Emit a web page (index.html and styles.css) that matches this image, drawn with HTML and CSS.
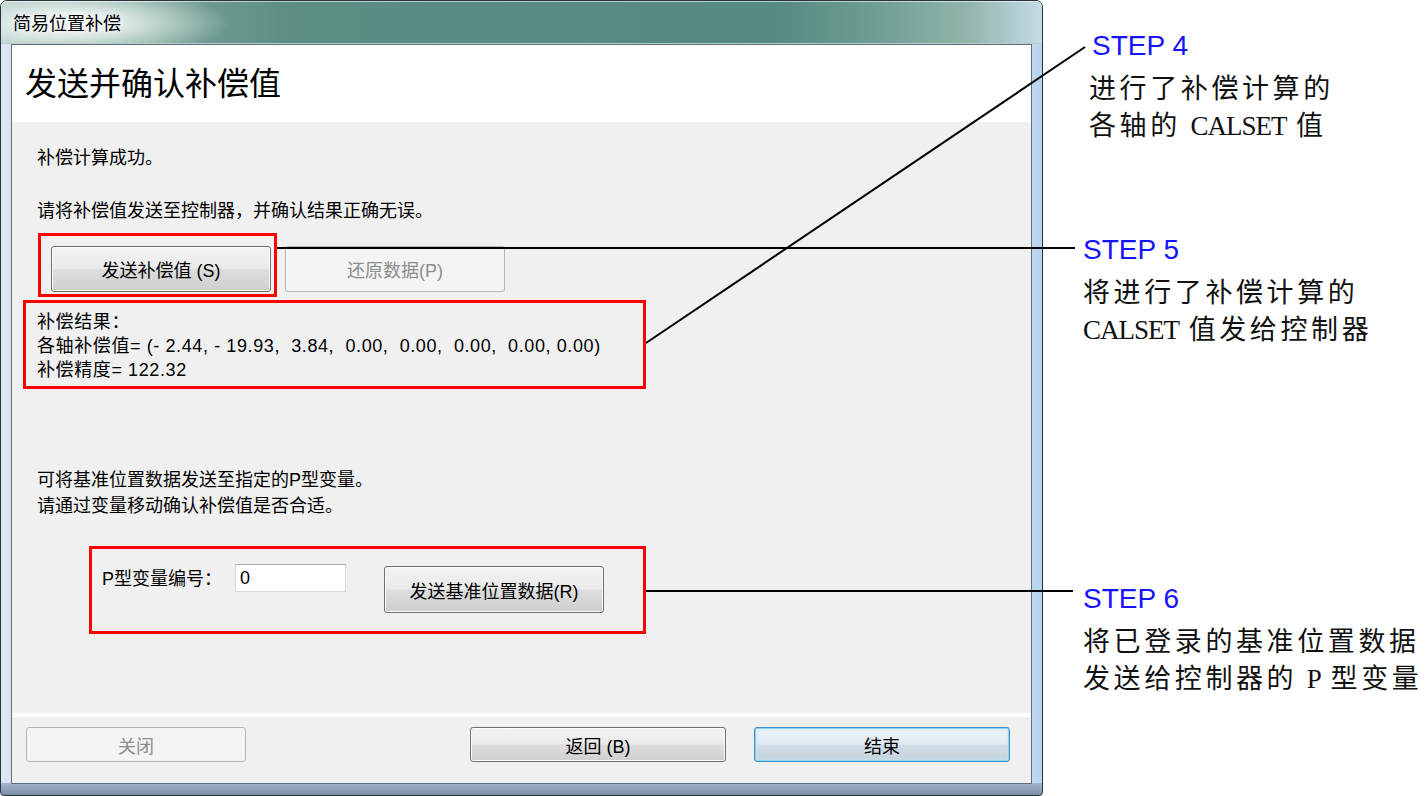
FILE: index.html
```html
<!DOCTYPE html>
<html lang="zh">
<head>
<meta charset="UTF-8">
<title>简易位置补偿</title>
<link rel="stylesheet" href="styles.css">
</head>
<body>

<div class="page">

<div class="window">
  <div class="titlebar">简易位置补偿</div>
  <div class="client">
    <div class="header">发送并确认补偿值</div>

    <div class="content">
      <p class="msg">补偿计算成功。</p>
      <p class="msg">请将补偿值发送至控制器，并确认结果正确无误。</p>

      <div class="btn-row">
        <button class="btn">发送补偿值 (S)</button>
        <button class="btn" disabled>还原数据(P)</button>
      </div>

      <div class="result">
        <div>补偿结果：</div>
        <div>各轴补偿值= (- 2.44, - 19.93,  3.84,  0.00,  0.00,  0.00,  0.00, 0.00)</div>
        <div>补偿精度= 122.32</div>
      </div>

      <div class="hint">
        <div>可将基准位置数据发送至指定的P型变量。</div>
        <div>请通过变量移动确认补偿值是否合适。</div>
      </div>

      <div class="var-row">
        <label>P型变量编号：</label>
        <input type="text" value="0">
        <button class="btn tall">发送基准位置数据(R)</button>
      </div>
    </div>

    <div class="footer">
      <button class="btn small" disabled>关闭</button>
      <button class="btn small long back">返回 (B)</button>
      <button class="btn small long finish">结束</button>
    </div>
  </div>
</div>

<div class="notes">
  <div class="note first">
    <div class="note-title">STEP 4</div>
    <div class="note-text">进行了补偿计算的</div>
    <div class="note-text">各轴的 <span class="en">CALSET</span> 值</div>
  </div>
  <div class="note second">
    <div class="note-title">STEP 5</div>
    <div class="note-text">将进行了补偿计算的</div>
    <div class="note-text"><span class="en">CALSET</span> 值发给控制器</div>
  </div>
  <div class="note third">
    <div class="note-title">STEP 6</div>
    <div class="note-text">将已登录的基准位置数据</div>
    <div class="note-text">发送给控制器的 <span class="en">P</span> 型变量</div>
  </div>
</div>

<!-- annotation marks drawn over the screenshot -->
<svg class="marks" width="1425" height="796" viewBox="0 0 1425 796">
  <g fill="none" stroke="#ff0000" stroke-width="3">
    <rect x="39.5" y="234.5" width="236" height="61"/>
    <rect x="24.5" y="301.5" width="620" height="86"/>
    <rect x="90.5" y="547.5" width="554" height="85"/>
  </g>
  <g stroke="#000" stroke-width="2">
    <line x1="277" y1="248" x2="1075" y2="248"/>
    <line x1="646" y1="343" x2="1085" y2="47"/>
    <line x1="646" y1="591" x2="1073" y2="591"/>
  </g>
</svg>

</div>

</body>
</html>
```

FILE: styles.css
```css
body {
    margin: 0;
    background: #fff;
    font-family: "Liberation Sans", "Noto Sans CJK SC", sans-serif;
    color: #000;
}

.page {
    position: relative;
    display: flex;
    width: 1425px;
    height: 796px;
    overflow: hidden;
}

/* window frame */
.window {
    box-sizing: border-box;
    flex: none;
    display: flex;
    flex-direction: column;
    width: 1043px;
    height: 796px;
    padding: 0 10px 11px;
    border: 1px solid #27333b;
    border-radius: 7px 7px 4px 4px;
    background:
        linear-gradient(180deg, #a3b6cc, #7b8fa9) bottom / 100% 12px no-repeat,
        linear-gradient(90deg, #dae7f3 0, #d3e3f2 2%, #c9def1 97%, #b8d4ef 100%);
}

.titlebar {
    box-sizing: border-box;
    height: 43px;
    margin: 0 -10px;
    padding-left: 12px;
    border-top: 1px solid rgba(255, 255, 255, 0.6);
    border-bottom: 1px solid #b7cfc9;
    border-radius: 6px 6px 0 0;
    font-family: "Noto Sans CJK SC", sans-serif;
    font-size: 18px;
    line-height: 41px;
    text-shadow: 0 0 6px #fff;
    background:
        radial-gradient(ellipse 160px 36px at 70px 21px, rgba(238, 245, 244, 0.95) 25%, rgba(238, 245, 244, 0) 100%),
        linear-gradient(90deg, #a8c4be 0, #7ba39a 14%, #5b8d83 28%, #558a80 74%, #6b9b91 83%, #92b5ad 93%, #c5dbe6 100%);
}

.client {
    flex: 1;
    display: flex;
    flex-direction: column;
    border: 1px solid #5f6e79;
    background: #f0f0f0;
}

.header {
    box-sizing: border-box;
    height: 77px;
    padding: 14px 0 0 13px;
    background: #fff;
    font-family: "Noto Sans CJK SC", sans-serif;
    font-size: 32px;
    line-height: 44px;
}

.content {
    flex: 1;
    padding: 24px 0 0 25px;
    font-size: 18px;
}

.msg {
    margin: 0;
    line-height: 25px;
}

.msg + .msg {
    margin-top: 28px;
}

.btn-row {
    display: flex;
    gap: 14px;
    margin: 22px 0 0 14px;
}

/* win7 push buttons */
.btn {
    box-sizing: border-box;
    width: 220px;
    height: 46px;
    padding: 0;
    font: inherit;
    font-size: 18px;
    color: #000;
    border: 1px solid #707070;
    border-radius: 3px;
    background: linear-gradient(180deg, #f2f2f2 0%, #ebebeb 48%, #dddddd 52%, #cfcfcf 100%);
    box-shadow: inset 0 0 0 1px #fbfbfb;
}

.btn:disabled {
    color: #8c8c8c;
    border-color: #b3b6b8;
    background: #f4f4f4;
    box-shadow: none;
}

.result {
    margin-top: 18px;
    line-height: 24px;
    letter-spacing: 0.6px;
}

.result div {
    white-space: pre;
}

.hint {
    margin-top: 85px;
    line-height: 26px;
}

.var-row {
    display: flex;
    align-items: flex-start;
    margin-top: 45px;
}

.var-row label {
    margin: 3px 0 0 65px;
    line-height: 25px;
}

.var-row input {
    box-sizing: border-box;
    width: 111px;
    height: 28px;
    margin-left: 13px;
    padding: 0 0 0 4px;
    font: inherit;
    font-size: 18px;
    border: 1px solid #d6dbe1;
    border-top-color: #abadb3;
    background: #fff;
    outline: none;
}

.btn.tall {
    height: 47px;
    margin: 2px 0 0 38px;
}

.footer {
    box-sizing: border-box;
    display: flex;
    height: 70px;
    padding: 10px 21px 0 14px;
    border-top: 4px solid #fff;
}

.btn.small {
    height: 35px;
}

.btn.long {
    width: 256px;
}

.btn.back {
    margin-left: auto;
}

.btn.finish {
    margin-left: 28px;
    border-color: #3c8fc8;
    background: linear-gradient(180deg, #ebf3f8 0%, #e1ecf3 48%, #d0dde6 52%, #c6d4df 100%);
    box-shadow: inset 0 0 0 1px #8fd3f5, inset 0 0 3px 1px #bfe6f8;
}

/* callouts on the right */
.notes {
    flex: 1;
    padding-left: 40px;
}

.note.first {
    margin-top: 30px;
    padding-left: 6px;
}

.note.first .note-title {
    padding-left: 3px;
}

.note.second {
    margin-top: 89px;
}

.note.third {
    margin-top: 234px;
}

.note-title {
    font-family: "Liberation Sans", sans-serif;
    font-size: 28px;
    line-height: 32px;
    color: #1414ff;
    margin-bottom: 6px;
}

.note-text {
    font-family: "Noto Sans CJK SC", sans-serif;
    font-size: 27px;
    line-height: 37px;
    letter-spacing: 3.6px;
    color: #111;
    white-space: nowrap;
}

.note-text .en {
    font-family: "Liberation Serif", serif;
    font-size: 27px;
    letter-spacing: -1px;
}

.marks {
    position: absolute;
    left: 0;
    top: 0;
    pointer-events: none;
}
```
